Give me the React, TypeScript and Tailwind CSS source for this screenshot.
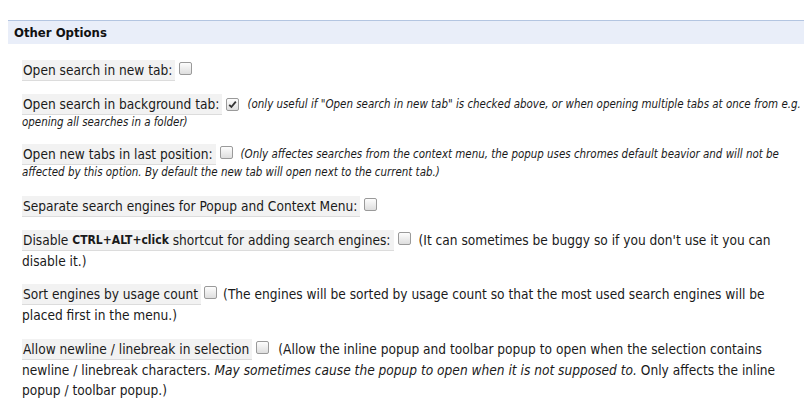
import React from 'react'

const font = { fontFamily: '"DejaVu Sans Condensed", "DejaVu Sans", Verdana, sans-serif' }

function Checkbox({ checked = false }: { checked?: boolean }) {
  return (
    <span className="inline-flex h-[13px] w-[13px] shrink-0 items-center justify-center rounded-[2px] border border-[#9a9a9a] bg-gradient-to-b from-[#fdfdfd] to-[#dedede]">
      {checked && (
        <svg width="9" height="9" viewBox="0 0 9 9">
          <path d="M1.2 4.8 L3.4 7 L7.8 1.6" fill="none" stroke="#333" strokeWidth="1.8" />
        </svg>
      )}
    </span>
  )
}

function Label({ children }: { children: React.ReactNode }) {
  return (
    <span className="flex h-[21px] items-center border-b border-[#dcdcdc] bg-[#f2f2f2] pl-[1px] pr-[3px]">
      {children}
    </span>
  )
}

export default function App() {
  return (
    <div className="min-h-screen bg-white px-2 pt-5 text-[13.6px] text-[#1a1a1a]" style={font}>
      <div className="border-t border-[#b3c5e1] bg-[#e9eef9]">
        <h2 className="flex h-[23px] items-center px-[6px] text-[13px] font-bold text-[#111]">Other Options</h2>
      </div>

      <div className="whitespace-nowrap pl-[14px]">
        <div className="mt-[16px] flex items-center">
          <Label>Open search in new tab:</Label>
          <span className="ml-[4px]"><Checkbox /></span>
        </div>

        <div className="mt-[13px]">
          <div className="flex items-center">
            <Label>Open search in background tab:</Label>
            <span className="ml-[4px]"><Checkbox checked /></span>
            <span className="ml-[8px] text-[11.45px] italic">
              (only useful if "Open search in new tab" is checked above, or when opening multiple tabs at once from e.g.
            </span>
          </div>
          <div className="text-[11.45px] italic leading-[15px]">opening all searches in a folder)</div>
        </div>

        <div className="mt-[14px]">
          <div className="flex items-center">
            <Label>Open new tabs in last position:</Label>
            <span className="ml-[4px]"><Checkbox /></span>
            <span className="ml-[8px] text-[11.45px] italic">
              (Only affectes searches from the context menu, the popup uses chromes default beavior and will not be
            </span>
          </div>
          <div className="text-[11.45px] italic leading-[15px]">
            affected by this option. By default the new tab will open next to the current tab.)
          </div>
        </div>

        <div className="mt-[16px] flex items-center">
          <Label>Separate search engines for Popup and Context Menu:</Label>
          <span className="ml-[4px]"><Checkbox /></span>
        </div>

        <div className="mt-[13px]">
          <div className="flex items-center">
            <Label>
              Disable&nbsp;<b className="text-[12px]">CTRL+ALT+click</b>&nbsp;shortcut for adding search engines:
            </Label>
            <span className="ml-[4px]"><Checkbox /></span>
            <span className="ml-[8px]">(It can sometimes be buggy so if you don't use it you can</span>
          </div>
          <div className="leading-[20px]">disable it.)</div>
        </div>

        <div className="mt-[13px]">
          <div className="flex items-center">
            <Label>Sort engines by usage count</Label>
            <span className="ml-[3px]"><Checkbox /></span>
            <span className="ml-[6px]">
              (The engines will be sorted by usage count so that the most used search engines will be
            </span>
          </div>
          <div className="leading-[20px]">placed first in the menu.)</div>
        </div>

        <div className="mt-[14px]">
          <div className="flex items-center">
            <Label>Allow newline / linebreak in selection</Label>
            <span className="ml-[4px]"><Checkbox /></span>
            <span className="ml-[9px]">
              (Allow the inline popup and toolbar popup to open when the selection contains
            </span>
          </div>
          <div className="leading-[20px]">
            newline / linebreak characters. <i>May sometimes cause the popup to open when it is not supposed to.</i> Only
            affects the inline
          </div>
          <div className="leading-[20px]">popup / toolbar popup.)</div>
        </div>
      </div>
    </div>
  )
}
